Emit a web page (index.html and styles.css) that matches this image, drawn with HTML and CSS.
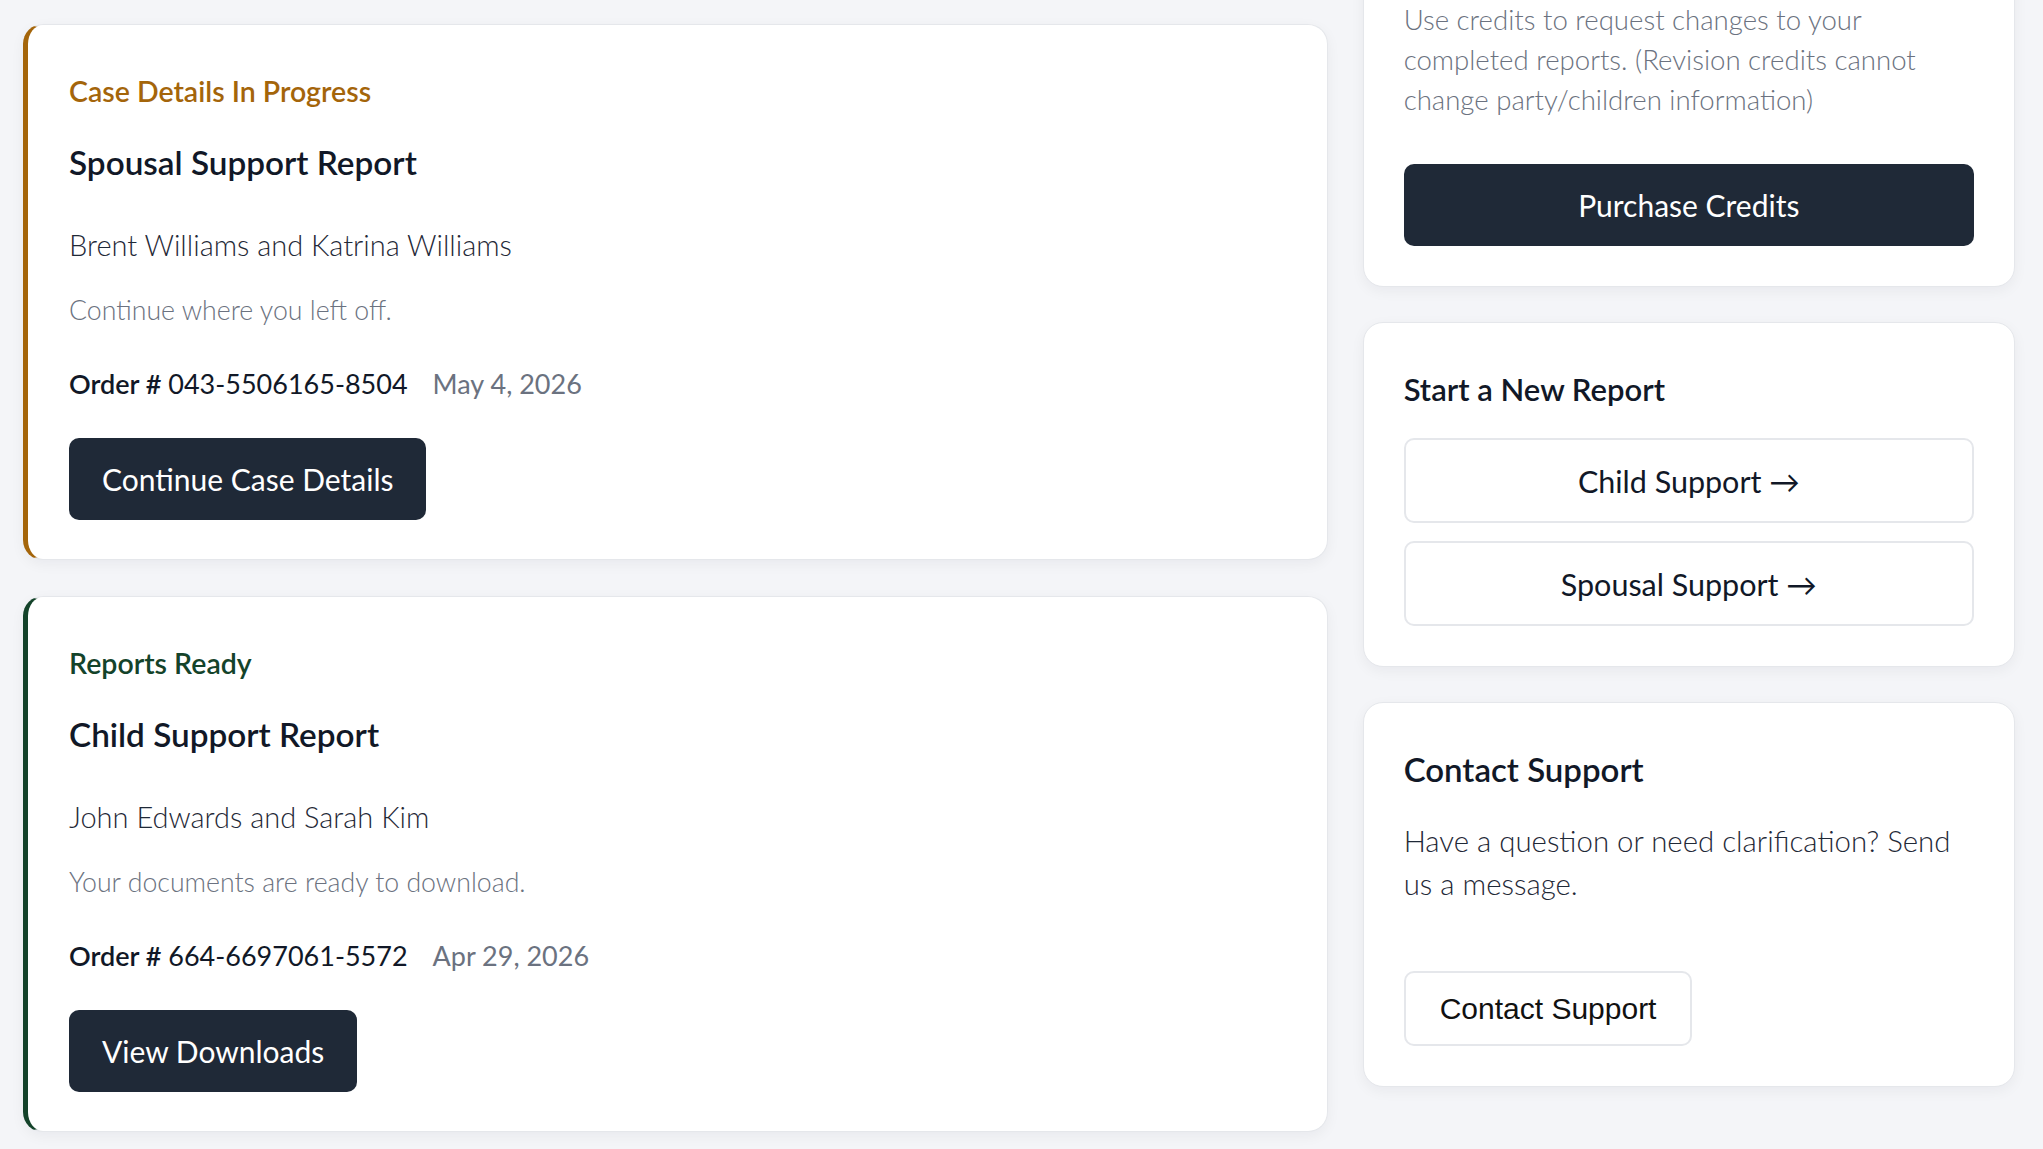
FILE: index.html
```html
<!doctype html>
<html lang="en">

<head>
    <meta charset="utf-8">
    <meta name="viewport" content="width=device-width, initial-scale=1">
    <title>My Reports</title>
    <link rel="stylesheet" href="styles.css">
</head>

<body>
<main class="dashboard">
    <div class="orders">
        <article class="card order-card order-card--progress">
            <p class="order-status">Case Details In Progress</p>
            <h2 class="order-title">Spousal Support Report</h2>
            <p class="order-parties">Brent Williams and Katrina Williams</p>
            <p class="order-hint">Continue where you left off.</p>
            <p class="order-meta">
                <span><strong>Order #</strong> 043-5506165-8504</span>
                <span class="order-date">May 4, 2026</span>
            </p>
            <a class="button button--dark" href="#">Continue Case Details</a>
        </article>

        <article class="card order-card order-card--ready">
            <p class="order-status">Reports Ready</p>
            <h2 class="order-title">Child Support Report</h2>
            <p class="order-parties">John Edwards and Sarah Kim</p>
            <p class="order-hint">Your documents are ready to download.</p>
            <p class="order-meta">
                <span><strong>Order #</strong> 664-6697061-5572</span>
                <span class="order-date">Apr 29, 2026</span>
            </p>
            <a class="button button--dark" href="#">View Downloads</a>
        </article>
    </div>

    <aside class="sidebar">
        <section class="card panel">
            <p class="panel-note">Use credits to request changes to your completed reports. (Revision credits cannot change party/children information)</p>
            <a class="button button--dark button--block" href="#">Purchase Credits</a>
        </section>

        <section class="card panel">
            <h3 class="panel-title">Start a New Report</h3>
            <div class="report-links">
                <a class="report-link" href="#">Child Support →</a>
                <a class="report-link" href="#">Spousal Support →</a>
            </div>
        </section>

        <section class="card panel">
            <h3 class="panel-title panel-title--large">Contact Support</h3>
            <p class="panel-text">Have a question or need clarification? Send us a message.</p>
            <button type="button" class="contact-button">Contact Support</button>
        </section>
    </aside>
</main>
</body>
</html>
```

FILE: styles.css
```css
:root {
    /* Colors */
    --color-bg: #f4f5f8;
    --color-card: #fff;
    --color-border: #e5e7eb;
    --color-heading: #111827;
    --color-text: #1f2937;
    --color-muted: #6b7280;
    --color-button: #1f2937;
    --color-progress: #a4650a;
    --color-ready: #14432a;

    /* Spacing */
    --space-card: 40px;
    --space-gap: 35px;
    --radius-card: 20px;
    --radius-button: 10px;

    /* Typography */
    --font-stack: "Lato", "Liberation Sans", sans-serif;
}

*, *::before, *::after {
    box-sizing: border-box;
}

body {
    margin: 0;
    font-family: var(--font-stack);
    background: var(--color-bg);
    color: var(--color-text);
}

p, h2, h3 {
    margin: 0;
}

.dashboard {
    display: grid;
    grid-template-columns: minmax(0, 2fr) minmax(0, 1fr);
    column-gap: var(--space-gap);
    align-items: start;
    padding: 24px 28px 40px 23px;
}

.orders {
    display: flex;
    flex-direction: column;
    gap: 36px;
}

.sidebar {
    display: flex;
    flex-direction: column;
    gap: var(--space-gap);
    margin-top: -65px;
}

.card {
    background: var(--color-card);
    border: 1px solid var(--color-border);
    border-radius: var(--radius-card);
    box-shadow: 0 4px 14px rgb(15 23 42 / 0.05);
    padding: var(--space-card);
}

/* Order cards */
.order-card {
    display: flex;
    flex-direction: column;
    align-items: flex-start;
    padding: 40px 40px 39px 41px;
    border-left-width: 5px;
}

.order-card--progress {
    border-left-color: var(--color-progress);
}

.order-card--ready {
    border-left-color: var(--color-ready);
}

.order-status {
    margin-top: 8px;
    font-size: 28.5px;
    font-weight: 600;
    line-height: 36px;
}

.order-card--progress .order-status {
    color: var(--color-progress);
}

.order-card--ready .order-status {
    color: var(--color-ready);
}

.order-title {
    margin-top: 33px;
    font-size: 33.3px;
    font-weight: 600;
    line-height: 40px;
    color: var(--color-heading);
}

.order-parties {
    margin-top: 43px;
    font-size: 29px;
    font-weight: 300;
    line-height: 40px;
    color: var(--color-text);
}

.order-hint {
    margin-top: 25px;
    font-size: 26.7px;
    font-weight: 300;
    line-height: 40px;
    color: var(--color-muted);
}

.order-meta {
    display: flex;
    gap: 25px;
    margin-top: 34px;
    font-size: 27px;
    line-height: 40px;
    color: var(--color-heading);
}

.order-meta strong {
    font-weight: 600;
}

.order-date {
    color: var(--color-muted);
}

/* Buttons */
.button {
    display: inline-block;
    padding: 21px 33px;
    border-radius: var(--radius-button);
    font-size: 30px;
    line-height: 40px;
    text-decoration: none;
}

.order-card .button {
    margin-top: 34px;
}

.button--dark {
    background: var(--color-button);
    color: #fff;
}

.button--block {
    display: block;
    text-align: center;
}

/* Sidebar panels */
.panel-note {
    font-size: 27.6px;
    font-weight: 300;
    line-height: 40px;
    color: var(--color-muted);
}

.panel-note + .button {
    margin-top: 44px;
}

.panel-title {
    margin-top: 8px;
    font-size: 31px;
    font-weight: 600;
    line-height: 36px;
    color: var(--color-heading);
}

.panel-title--large {
    font-size: 33px;
}

.report-links {
    display: flex;
    flex-direction: column;
    gap: 18px;
    margin-top: 31px;
}

.report-link {
    display: block;
    padding: 20.5px 16px;
    border: 2px solid var(--color-border);
    border-radius: var(--radius-button);
    font-size: 30.5px;
    line-height: 40px;
    text-align: center;
    text-decoration: none;
    color: var(--color-heading);
}

.panel-text {
    margin-top: 32px;
    font-size: 29.4px;
    font-weight: 300;
    line-height: 43px;
    color: var(--color-text);
}

.contact-button {
    display: block;
    margin-top: 66px;
    padding: 18.5px 34px;
    background: #fff;
    border: 2px solid var(--color-border);
    border-radius: var(--radius-button);
    font-family: "Liberation Sans", Arial, sans-serif;
    font-size: 30px;
    line-height: 34px;
    color: #111;
    cursor: pointer;
}
```
